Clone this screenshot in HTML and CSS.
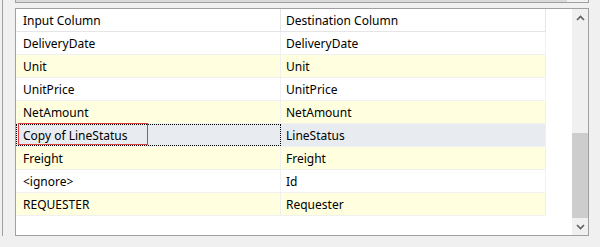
FILE: index.html
```html
<!DOCTYPE html>
<html>
<head>
<meta charset="utf-8">
<link rel="stylesheet" href="styles.css">
</head>
<body>
<div class="frame">
  <div class="topstrip"><div class="topbar"></div></div>
  <div class="listbox">
    <div class="grid-area">
      <div class="row header">
        <div class="cell c1">Input Column</div>
        <div class="cell c2">Destination Column</div>
      </div>
      <div class="row">
        <div class="cell c1">DeliveryDate</div>
        <div class="cell c2">DeliveryDate</div>
      </div>
      <div class="row alt">
        <div class="cell c1">Unit</div>
        <div class="cell c2">Unit</div>
      </div>
      <div class="row">
        <div class="cell c1">UnitPrice</div>
        <div class="cell c2">UnitPrice</div>
      </div>
      <div class="row alt">
        <div class="cell c1">NetAmount</div>
        <div class="cell c2">NetAmount</div>
      </div>
      <div class="row selected">
        <div class="cell c1 focus"><span class="mark">Copy of LineStatus</span></div>
        <div class="cell c2">LineStatus</div>
      </div>
      <div class="row alt">
        <div class="cell c1">Freight</div>
        <div class="cell c2">Freight</div>
      </div>
      <div class="row">
        <div class="cell c1">&lt;ignore&gt;</div>
        <div class="cell c2">Id</div>
      </div>
      <div class="row alt">
        <div class="cell c1">REQUESTER</div>
        <div class="cell c2">Requester</div>
      </div>
    </div>
    <div class="vscroll">
      <div class="arrow">
        <svg width="9" height="6" viewBox="0 0 9 6"><path d="M1 5 L4.5 1.5 L8 5" fill="none" stroke="#606060" stroke-width="1.6"/></svg>
      </div>
      <div class="track"><div class="thumb"></div></div>
      <div class="arrow">
        <svg width="9" height="6" viewBox="0 0 9 6"><path d="M1 1 L4.5 4.5 L8 1" fill="none" stroke="#606060" stroke-width="1.6"/></svg>
      </div>
    </div>
  </div>
</div>
</body>
</html>
```

FILE: styles.css
```css
html, body {
  margin: 0;
  padding: 0;
  background: #f0f0f0;
  width: 600px;
  height: 247px;
  overflow: hidden;
  font-family: "Noto Sans", "Open Sans", sans-serif;
  font-size: 12px;
  color: #000;
}

.frame {
  margin-left: 2px;
  border-left: 1px solid #a0a0a0;
  height: 236px;
  padding-left: 12px;
  box-sizing: border-box;
}

.topstrip {
  width: 574px;
  height: 3px;
  box-sizing: border-box;
  border: 1px solid #a0a0a0;
  border-top: none;
  display: flex;
}

.topbar {
  width: 551px;
  height: 2px;
  background: #dadada;
}

.listbox {
  margin-top: 5px;
  width: 574px;
  height: 228px;
  box-sizing: border-box;
  border: 1px solid #a0a0a0;
  background: #fff;
  display: flex;
}

.grid-area {
  flex: 1;
  display: flex;
  flex-direction: column;
}

.row {
  display: flex;
  height: 23px;
  box-sizing: border-box;
  border-bottom: 1px solid #f0f0f0;
  width: 530px;
}

.row.alt .cell { background: #ffffe0; }
.row.selected .cell { background: #e8ecf1; }

.cell {
  width: 265px;
  box-sizing: border-box;
  border-right: 1px solid #f0f0f0;
  display: flex;
  align-items: center;
  white-space: nowrap;
  position: relative;
}

.c1 { padding-left: 7px; }
.c2 { padding-left: 5px; }

.header .cell { border-right-color: #e5e5e5; }
.header { border-bottom-color: #e5e5e5; }

.focus {
  outline: 1px dotted #000;
  outline-offset: -1px;
}

.mark {
  position: relative;
}
.mark::after {
  content: "";
  position: absolute;
  left: -5px;
  top: -4px;
  width: 128px;
  height: 20px;
  border: 1px solid #e03c3c;
}

.vscroll {
  width: 16px;
  background: #f0f0f0;
  display: flex;
  flex-direction: column;
}

.arrow {
  height: 17px;
  display: flex;
  align-items: center;
  justify-content: center;
}

.track {
  flex: 1;
  display: flex;
  flex-direction: column;
  justify-content: flex-end;
}

.thumb {
  height: 85px;
  background: #cdcdcd;
}
```
